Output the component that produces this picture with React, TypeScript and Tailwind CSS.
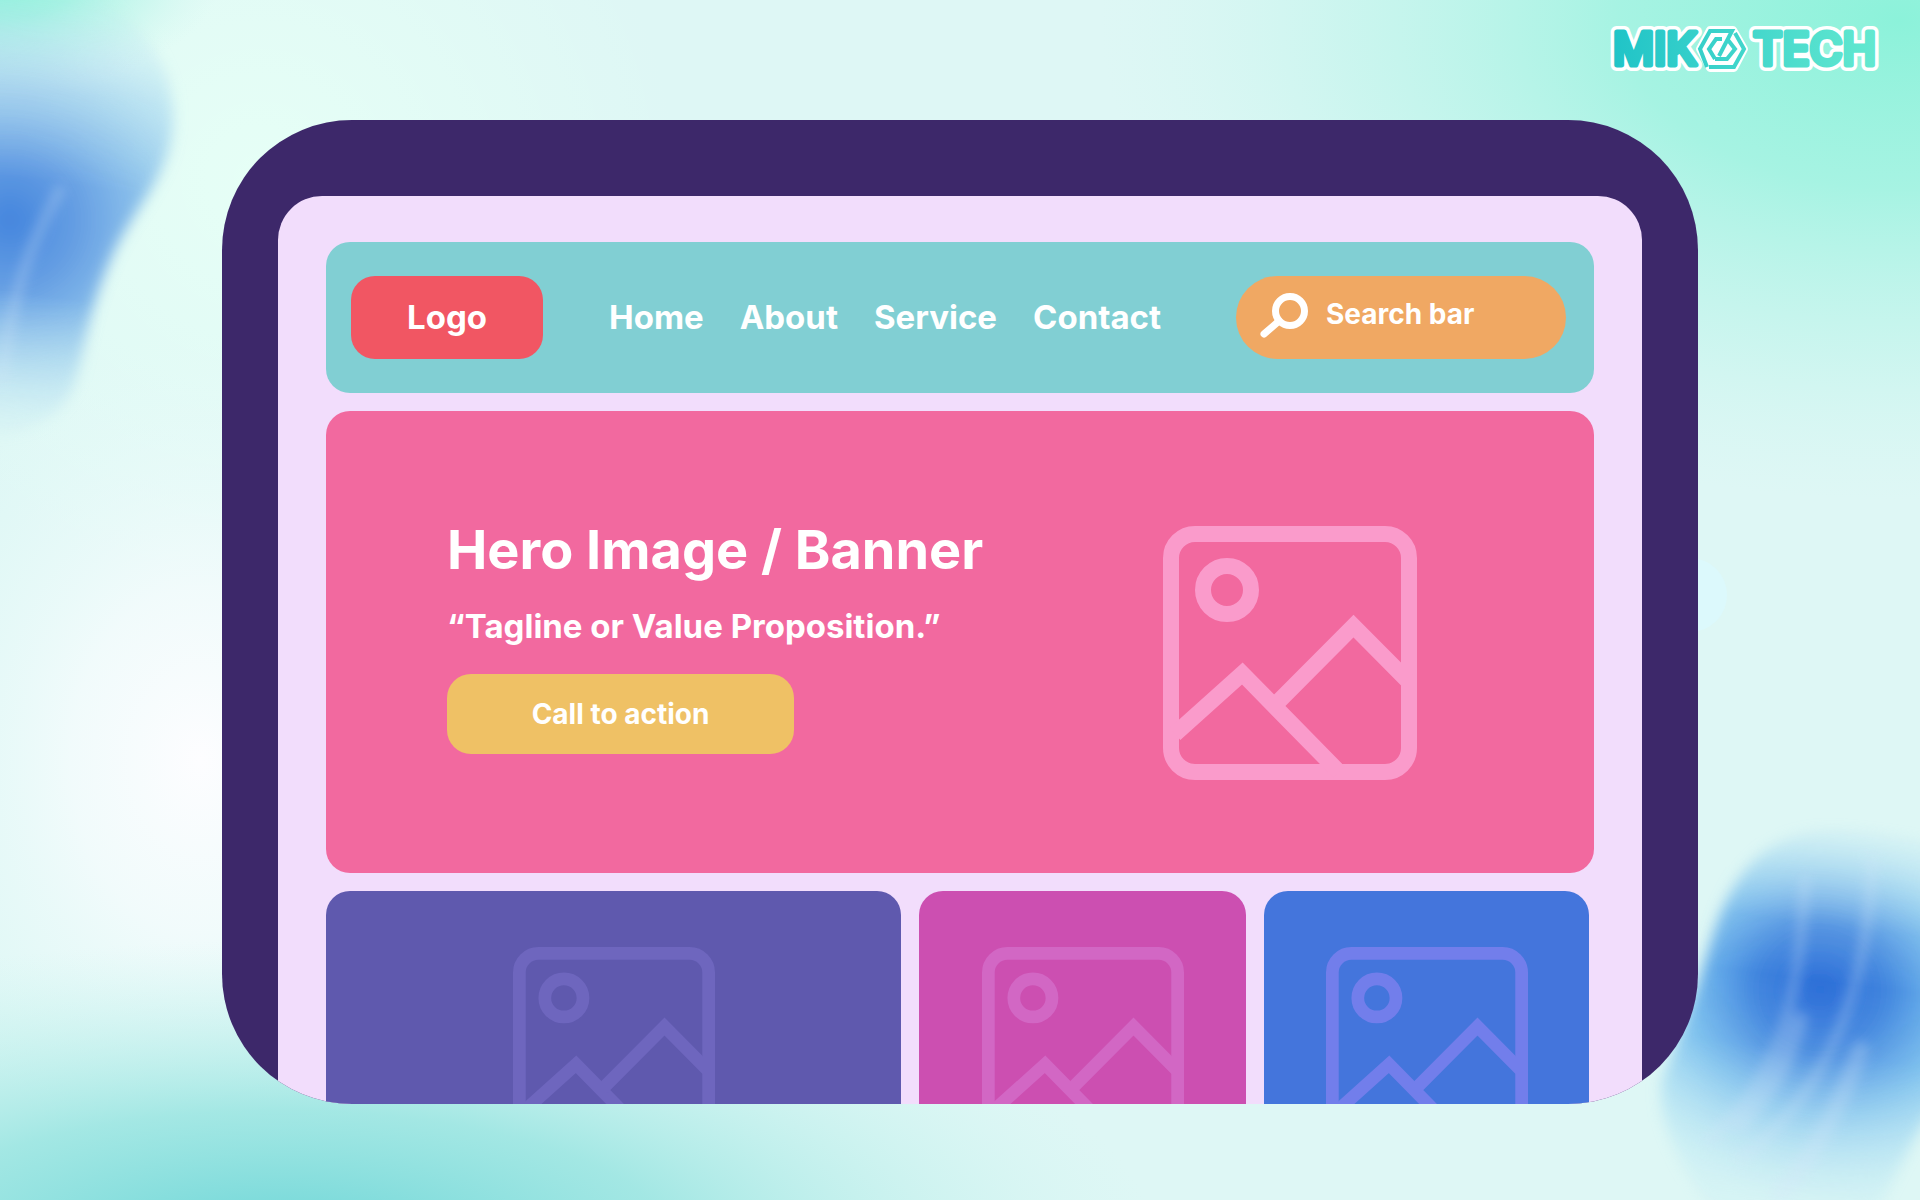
import React from 'react';

const navItems = ['Home', 'About', 'Service', 'Contact'];

function PlaceholderImage({ className }: { className: string }) {
    return (
        <svg viewBox="0 0 254 254" fill="none" stroke="currentColor" strokeWidth="16" className={className} aria-hidden="true">
            <rect x="8" y="8" width="238" height="238" rx="24" />
            <circle cx="64" cy="64" r="24" />
            <path d="M12 208 79.300 147.500 176 246" />
            <path d="M113 178 190.500 100 244 154" />
        </svg>
    );
}

function Background() {
    return (
        <svg viewBox="0 0 1920 1200" preserveAspectRatio="none" className="absolute inset-0 h-full w-full" aria-hidden="true">
            <defs>
                <radialGradient id="mint">
                    <stop offset="0" stopColor="#8cf2da" />
                    <stop offset="0.35" stopColor="#98f2de" stopOpacity="0.8" />
                    <stop offset="0.7" stopColor="#b0f3e6" stopOpacity="0.4" />
                    <stop offset="1" stopColor="#c9f6ee" stopOpacity="0" />
                </radialGradient>
                <radialGradient id="teal">
                    <stop offset="0" stopColor="#68d4d6" />
                    <stop offset="0.45" stopColor="#8fe2de" stopOpacity="0.75" />
                    <stop offset="1" stopColor="#c9f4ef" stopOpacity="0" />
                </radialGradient>
                <radialGradient id="white">
                    <stop offset="0" stopColor="#fdfdff" />
                    <stop offset="0.4" stopColor="#f6fcfd" stopOpacity="0.8" />
                    <stop offset="1" stopColor="#e8fbf9" stopOpacity="0" />
                </radialGradient>
                <radialGradient id="pale">
                    <stop offset="0" stopColor="#e6fff6" />
                    <stop offset="1" stopColor="#e6fff6" stopOpacity="0" />
                </radialGradient>
                <radialGradient id="blueLeft" gradientUnits="userSpaceOnUse" cx="10" cy="220" r="230" gradientTransform="rotate(12 10 220)">
                    <stop offset="0" stopColor="#4485de" />
                    <stop offset="0.3" stopColor="#669fe3" />
                    <stop offset="0.6" stopColor="#85bdea" stopOpacity="0.9" />
                    <stop offset="1" stopColor="#a5daf2" stopOpacity="0.6" />
                </radialGradient>
                <radialGradient id="blueRight" gradientUnits="userSpaceOnUse" cx="1820" cy="990" r="215">
                    <stop offset="0" stopColor="#2a6cd7" />
                    <stop offset="0.3" stopColor="#3f84de" />
                    <stop offset="0.6" stopColor="#68b4ec" stopOpacity="0.9" />
                    <stop offset="1" stopColor="#9bdcf4" stopOpacity="0.55" />
                </radialGradient>
                <linearGradient id="fadeLeft" gradientUnits="userSpaceOnUse" x1="60" y1="0" x2="0" y2="450">
                    <stop offset="0" stopColor="#fff" stopOpacity="0.1" />
                    <stop offset="0.2" stopColor="#fff" stopOpacity="0.65" />
                    <stop offset="0.4" stopColor="#fff" />
                    <stop offset="0.65" stopColor="#fff" />
                    <stop offset="1" stopColor="#fff" stopOpacity="0" />
                </linearGradient>
                <linearGradient id="fadeRight" gradientUnits="userSpaceOnUse" x1="1840" y1="815" x2="1790" y2="1210">
                    <stop offset="0" stopColor="#fff" stopOpacity="0" />
                    <stop offset="0.28" stopColor="#fff" stopOpacity="0.85" />
                    <stop offset="0.42" stopColor="#fff" />
                    <stop offset="0.6" stopColor="#fff" stopOpacity="0.9" />
                    <stop offset="1" stopColor="#fff" stopOpacity="0.2" />
                </linearGradient>
                <mask id="maskLeft" maskUnits="userSpaceOnUse" x="-40" y="-40" width="260" height="520">
                    <rect x="-40" y="-40" width="260" height="520" fill="url(#fadeLeft)" />
                </mask>
                <mask id="maskRight" maskUnits="userSpaceOnUse" x="1620" y="780" width="340" height="460">
                    <rect x="1620" y="780" width="340" height="460" fill="url(#fadeRight)" />
                </mask>
                <filter id="soft" x="-20%" y="-20%" width="140%" height="140%">
                    <feGaussianBlur stdDeviation="7" />
                </filter>
                <filter id="streak" x="-50%" y="-20%" width="200%" height="140%">
                    <feGaussianBlur stdDeviation="6" />
                </filter>
            </defs>
            <rect width="1920" height="1200" fill="#def7f5" />
            <ellipse cx="260" cy="180" rx="420" ry="420" fill="url(#pale)" />
            <ellipse cx="200" cy="760" rx="320" ry="430" fill="url(#white)" />
            <ellipse cx="1900" cy="20" rx="800" ry="480" fill="url(#mint)" />
            <ellipse cx="0" cy="-20" rx="220" ry="110" fill="url(#mint)" />
            <ellipse cx="280" cy="1250" rx="880" ry="310" fill="url(#teal)" />
            <circle cx="1690" cy="595" r="37" fill="#dcf9fc" />
            <g mask="url(#maskLeft)">
                <path filter="url(#soft)" d="M-20-20H70C150 20 176 70 173 125C169 180 130 210 108 265C85 320 84 360 72 390C55 425 20 435-20 445Z" fill="url(#blueLeft)" />
            </g>
            <g mask="url(#maskRight)">
                <path filter="url(#soft)" d="M1698 985C1712 940 1718 905 1745 870C1780 825 1850 812 1940 842V1100C1915 1130 1895 1180 1870 1225H1720C1690 1180 1655 1130 1662 1080Z" fill="url(#blueRight)" />
            </g>
            <g filter="url(#streak)" fill="none" stroke="#d5e6fa" strokeWidth="10" opacity="0.28" strokeLinecap="round">
                <path d="M60 190C30 245 12 290 2 380" />
                <path d="M1805 880C1798 990 1790 1060 1710 1140" />
                <path d="M1872 860C1868 990 1830 1090 1740 1160" />
                <path strokeWidth="16" d="M1800 1020C1785 1070 1770 1090 1740 1125" />
                <path strokeWidth="18" d="M1860 1050C1840 1110 1810 1160 1780 1195" />
            </g>
        </svg>
    );
}

function BrandLogo() {
    return (
        <svg viewBox="0 0 288 68" className="absolute top-4 right-6 w-72 font-medium" role="img" aria-label="Mikotech">
            <defs>
                <linearGradient id="brand" gradientUnits="userSpaceOnUse" x1="0" y1="0" x2="280" y2="0">
                    <stop offset="0" stopColor="#1fc3c7" />
                    <stop offset="1" stopColor="#66ead0" />
                </linearGradient>
            </defs>
            <g stroke="#fff" strokeWidth="12" strokeLinejoin="round" fill="#fff" fontSize="45">
                <text x="5" y="49">MIK</text>
                <text x="145" y="49">TECH</text>
            </g>
            <path d="M102 14H125L136 33 126 52H102L92 33Z" fill="#fff" stroke="#fff" strokeWidth="8" strokeLinejoin="round" />
            <g fill="url(#brand)" stroke="url(#brand)" strokeWidth="5" strokeLinejoin="round" fontSize="45">
                <text x="5" y="49">MIK</text>
                <text x="145" y="49">TECH</text>
            </g>
            <g fill="none" stroke="url(#brand)" strokeWidth="4">
                <path d="M99 51 92 33 102 15H124L111 40" />
                <path d="M107 43 101 33 108 23H114" />
                <path d="M127 17 136 33 126 51H101" />
                <path d="M120 24 127 33 119 43H107" />
            </g>
        </svg>
    );
}

export default function App() {
    return (
        <main className="relative flex h-screen flex-col overflow-hidden px-[222px] pt-30 pb-24 font-['Inter',sans-serif] font-bold text-white">
            <Background />
            <BrandLogo />

            {/* Device */}
            <div className="relative min-h-0 flex-1 overflow-hidden rounded-[130px] bg-[#3d286a] px-14 pt-19">
                <div className="flex h-full flex-col gap-[18px] rounded-t-[44px] bg-[#f2ddfc] px-12 pt-[46px]">
                    <header className="flex shrink-0 items-center rounded-3xl bg-[#81cfd3] py-[34px] pr-7 pl-[25px] text-[33px]">
                        <a href="#" className="flex h-[83px] w-48 items-center justify-center rounded-3xl bg-[#f15663]">Logo</a>
                        <nav className="ml-[66px] flex gap-9">
                            {navItems.map((item) => (
                                <a key={item} href="#">{item}</a>
                            ))}
                        </nav>
                        <label className="ml-auto flex h-[83px] w-[330px] items-center gap-[18px] rounded-full bg-[#f0a863] pr-8 pb-2 pl-6">
                            <svg viewBox="0 0 48 44" fill="none" stroke="currentColor" strokeWidth="7" strokeLinecap="round" className="w-12 shrink-0 overflow-visible" aria-hidden="true">
                                <circle cx="30" cy="19" r="14.500" />
                                <path d="M19 29 4 42" />
                            </svg>
                            <input type="search" aria-label="Search bar" placeholder="Search bar" className="w-full min-w-0 bg-transparent text-[28px] outline-none placeholder:text-white" />
                        </label>
                    </header>

                    {/* Hero */}
                    <section className="flex h-[462px] shrink-0 items-start justify-between rounded-3xl bg-[#f2699f] pt-[107px] pr-[177px] pl-[121px]">
                        <div>
                            <h1 className="text-[54px] leading-16">Hero Image / Banner</h1>
                            <p className="mt-6 text-[33px] leading-10">“Tagline or Value Proposition.”</p>
                            <button className="mt-7 h-20 w-[347px] rounded-3xl bg-[#efc165] text-[28px]">Call to action</button>
                        </div>
                        <PlaceholderImage className="mt-2 w-[254px] text-[#fa9bcb]" />
                    </section>

                    <section className="grid shrink-0 grid-cols-[575fr_327fr_325fr] gap-[18px] pr-[5px]">
                        <div className="flex justify-center rounded-3xl bg-[#5f59ae] py-14">
                            <PlaceholderImage className="w-[202px] text-[#6e66be]" />
                        </div>
                        <div className="flex justify-center rounded-3xl bg-[#cc4fb1] py-14">
                            <PlaceholderImage className="w-[202px] text-[#d267c4]" />
                        </div>
                        <div className="flex justify-center rounded-3xl bg-[#4475dc] py-14">
                            <PlaceholderImage className="w-[202px] text-[#727eeb]" />
                        </div>
                    </section>
                </div>
            </div>
        </main>
    );
}
